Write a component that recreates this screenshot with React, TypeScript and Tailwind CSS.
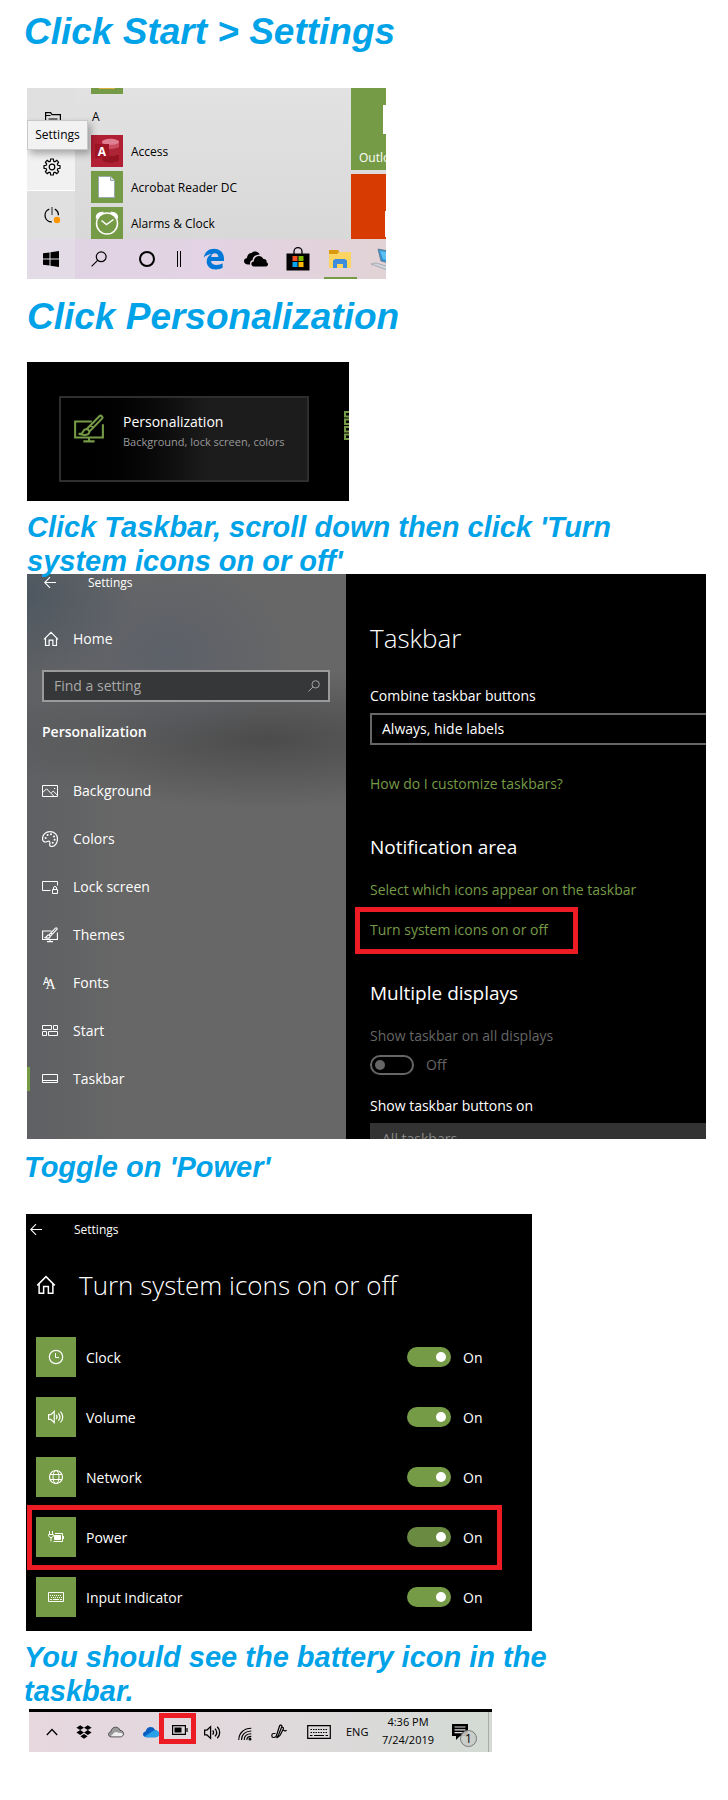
import { ReactNode } from "react";

interface IconProps {
  className?: string;
}

interface StrokeIconProps extends IconProps {
  box?: string;
  children: ReactNode;
}

const StrokeIcon = ({ className = "size-4", box = "0 0 16 16", children }: StrokeIconProps) => (
  <svg
    className={`shrink-0 ${className}`}
    viewBox={box}
    fill="none"
    stroke="currentColor"
    strokeWidth="1"
    aria-hidden="true"
  >
    {children}
  </svg>
);

const BackIcon = () => (
  <StrokeIcon className="w-3 h-3" box="0 0 12 12">
    <path d="M12 5.5H.8M6 .2L.7 5.500 6 10.800" strokeWidth="1.100" />
  </StrokeIcon>
);

const HomeIcon = ({ className }: IconProps) => (
  <StrokeIcon className={className}>
    <path d="M1 8.300L8 1.300l7 7M2.500 7v7.500h3.600V9.200h3.800v5.300h3.600V7" strokeWidth="1.200" />
  </StrokeIcon>
);

const SearchIcon = ({ className }: IconProps) => (
  <StrokeIcon className={className}>
    <circle cx="10.200" cy="5.800" r="4.900" strokeWidth="1.200" />
    <path d="M6.600 9.300L.6 15.400" strokeWidth="1.200" />
  </StrokeIcon>
);

const PictureIcon = () => (
  <StrokeIcon>
    <path d="M.5 2.500h15v11H.5zM.8 9.500L4.500 5.800l7.300 7.400M9.300 9.800l2-1.700 4 4" />
    <path d="M12 5h1.200v1H12z" fill="currentColor" stroke="none" />
  </StrokeIcon>
);

const PaletteIcon = () => (
  <StrokeIcon>
    <path
      d="M8 .6c4.400 0 7.500 3 7.500 7.200 0 4.300-2.800 7.700-5.700 7.700-1.600 0-2.300-.9-2.100-2.200.2-1.300.5-2-.1-2.800-.7-.8-1.700-.2-2.800.2C2.300 11.600.5 10.200.5 7.800.5 3.600 3.700.6 8 .6z"
      strokeWidth="1.200"
    />
    <g fill="currentColor" stroke="none">
      <circle cx="3.600" cy="7" r="1" />
      <circle cx="5.600" cy="4" r="1" />
      <circle cx="9" cy="3.300" r="1" />
      <circle cx="12" cy="5.400" r="1" />
      <circle cx="12.600" cy="8.800" r="1" />
      <circle cx="10.700" cy="11.800" r="1" />
    </g>
  </StrokeIcon>
);

const LockScreenIcon = () => (
  <StrokeIcon>
    <path d="M8.500 11.500h-8v-9h15v4M10.500 10.500h5v4h-5zM11.500 10.500V9a1.500 1.500 0 013 0v1.500" />
  </StrokeIcon>
);

const ThemesIcon = ({ className }: IconProps) => (
  <StrokeIcon className={className}>
    <path d="M9.500 4H.6v8.500h14.800V5.500M8 12.500v2M5 14.600h6" strokeWidth="1.100" />
    <path
      d="M2.500 10.600c1.800 0 2-.2 2.400-1.300.4-1.300 2-1.600 2.800-.8.9.9.4 2.400-1 2.600-1.500.2-2.800 0-4.200-.5zM6.700 8.100l6.800-6.900c.9-.8 2.200.3 1.400 1.300L8.200 9.400M8.800 6l1.800 1.500"
      strokeWidth="1.100"
    />
  </StrokeIcon>
);

const FontsIcon = () => (
  <span className="flex w-4 shrink-0 items-end pl-px" aria-hidden="true">
    <span className="pb-1 font-['Noto_Sans'] text-[10px] leading-3">A</span>
    <span className="-ml-1 font-['Liberation_Serif'] text-[14px] leading-3">A</span>
  </span>
);

const StartIcon = () => (
  <StrokeIcon>
    <path d="M.5 2.500h9v4h-9zM11.500 2.500h4v4h-4zM.5 8.500h4v4h-4zM6.500 8.500h9v4h-9z" />
  </StrokeIcon>
);

const TaskbarIcon = () => (
  <StrokeIcon>
    <path d="M.5 3.500h15v8H.5zM.5 9.500h15" />
  </StrokeIcon>
);

const GearIcon = () => (
  <StrokeIcon box="0 0 18 18" className="size-[18px]">
    <path
      d="M7.700 1h2.600l.4 2.200 1.200.5 1.900-1.300 1.800 1.800-1.300 1.900.5 1.200 2.200.4v2.600l-2.200.4-.5 1.200 1.300 1.900-1.800 1.800-1.900-1.300-1.200.5-.4 2.200H7.700l-.4-2.200-1.200-.5-1.900 1.300-1.800-1.800 1.300-1.900-.5-1.200L1 10.300V7.700l2.200-.4.5-1.200-1.300-1.900 1.800-1.800 1.900 1.300 1.200-.5z"
      strokeWidth="1.200"
    />
    <circle cx="9" cy="9" r="2.800" strokeWidth="1.200" />
  </StrokeIcon>
);

const PowerIcon = () => (
  <StrokeIcon box="0 0 18 18" className="size-[18px]">
    <path d="M9 1v8" strokeWidth="1.800" stroke="#777" />
    <path d="M6.300 3.200a6.500 6.500 0 002.500 12.600M11.800 3.200a6.500 6.500 0 013.600 6" strokeWidth="1.300" />
    <circle cx="14" cy="14" r="3.200" fill="#ff9500" stroke="none" />
  </StrokeIcon>
);

const FolderOutlineIcon = () => (
  <StrokeIcon>
    <path d="M.6 14V1.600h5l1.500 2h8.300V14zM3.500 8h9M.6 4.500h5" strokeWidth="1.200" />
  </StrokeIcon>
);

const VolumeIcon = ({ className }: IconProps) => (
  <StrokeIcon className={className}>
    <path
      d="M.6 5.700h2.200L6.200 2.500v11l-3.400-3.200H.6zM8.200 6c1 1.200 1 2.800 0 4M10.300 4.300c2 2.200 2 5.200 0 7.400M12.500 2.600c3 3.200 3 7.600 0 10.800"
      strokeWidth="1.200"
    />
  </StrokeIcon>
);

const ClockIcon = () => (
  <StrokeIcon>
    <circle cx="8" cy="8" r="6.700" strokeWidth="1.200" />
    <path d="M7.500 4v4.500H11" />
  </StrokeIcon>
);

const GlobeIcon = () => (
  <StrokeIcon>
    <circle cx="8" cy="8" r="6.500" strokeWidth="1.200" />
    <ellipse cx="8" cy="8" rx="3" ry="6.500" />
    <path d="M2 5.500h12M2 10.500h12" />
  </StrokeIcon>
);

const PlugBatteryIcon = () => (
  <StrokeIcon>
    <path d="M1.500 2v3M4.500 2v3M.5 5.500h5v1.200L4 8.500H2L.5 6.700zM3 8.500v4M7 4.500h7.500v8h-9M15.500 7v3" />
    <path d="M6.500 6.500h6v4h-6z" fill="currentColor" />
  </StrokeIcon>
);

const KeyboardIcon = ({ className }: IconProps) => (
  <StrokeIcon className={className} box="0 0 24 14">
    <path d="M.7.7h22.600v12.600H.7z" strokeWidth="1.200" />
    <path d="M3.500 4.500h17.500M3.500 7.500h17.500" strokeDasharray="1.500 1" />
    <path d="M3 10.500h2.500M7 10.500h10M18.500 10.500H21" />
  </StrokeIcon>
);

const SmallKeyboardIcon = () => (
  <StrokeIcon className="h-2.5 w-4" box="0 0 16 10">
    <path d="M.5.5h15v9H.5z" />
    <path d="M2 3.500h12M3 5.500h11" strokeDasharray="1 1" />
    <path d="M2 7.500h2M5 7.500h6M12 7.500h2" />
  </StrokeIcon>
);

/* ---- start menu ---- */

const AccessLogo = () => (
  <svg viewBox="0 0 32 32" className="size-8 shrink-0 bg-[#b01f33]" aria-hidden="true">
    <path d="M11 6v19c0 1.700 4 3 8.500 3s8.500-1.300 8.500-3V6z" fill="#c94f60" />
    <path d="M11 18v7c0 1.700 4 3 8.500 3s8.500-1.300 8.500-3v-6c-2 2-12 2-17-1z" fill="#941421" />
    <path d="M11 13v6c5 3 14 2 17 0v-7c-3 2-12 3-17 1z" fill="#ad2436" />
    <ellipse cx="19.500" cy="6.800" rx="8.500" ry="3" fill="#df7f92" />
    <path d="M4 9h14v14H4z" fill="#a01526" />
    <text x="11" y="20.500" textAnchor="middle" fill="#fff" fontSize="12" fontWeight="700" fontFamily="Open Sans, sans-serif">
      A
    </text>
  </svg>
);

const ReaderLogo = () => (
  <svg viewBox="0 0 32 32" className="size-8 shrink-0 bg-[#769b47]" aria-hidden="true">
    <path d="M7.500 5.500h12l4 4v17h-16z" fill="#fff" stroke="#9aa" />
    <path d="M19.500 5.500v4h4" fill="#ddd" stroke="#9aa" />
  </svg>
);

const AlarmLogo = () => (
  <svg
    viewBox="0 0 32 32"
    className="size-8 shrink-0 bg-[#769b47]"
    fill="none"
    stroke="#fff"
    strokeWidth="1.500"
    aria-hidden="true"
  >
    <path d="M5 12c-1-5 3-8 8-7zM27 12c1-5-3-8-8-7z" fill="#fff" stroke="none" />
    <circle cx="16" cy="16.500" r="10.500" fill="#769b47" />
    <path d="M10.500 13.500l5 4 7-5" />
  </svg>
);

const EdgeLogo = () => (
  <svg viewBox="0 0 22 22" className="size-[22px]" aria-hidden="true">
    <path
      d="M.8 9.700C1.600 4.200 5.400.7 11 .7c6.200 0 10 4.200 10 10v2.300H8c.2 2.700 2.500 4 5.600 4 2.200 0 4.300-.6 6-1.700v4.400c-1.900 1.100-4.200 1.700-6.900 1.700-5.500 0-9-3.300-9-8 0-3.300 1.800-6 5-7.400C5.200 6.500 2.400 7.600.8 9.700zM8.200 9h7.100c0-2.400-1.300-3.700-3.500-3.700S8.500 6.600 8.200 9z"
      fill="#0078d7"
      fillRule="evenodd"
    />
  </svg>
);

const OneDriveLogo = () => (
  <svg viewBox="0 0 24 16" className="h-4 w-6" aria-hidden="true">
    <path
      d="M4 13.500c-2.300 0-4-1.300-4-3.200C0 8.600 1.100 7.300 3 7c.2-3 2-5 4.600-5C9 .5 11 .2 12.700.7c1.300.4 2.300 1.300 3 2.700C11 3.600 8.500 6 8.600 9c-1.900.5-3 2-2.400 4.500z"
      fill="#000"
    />
    <path d="M9.800 15.500c-3.500-.5-3-5 0-5 0-6 7.300-7.600 9.600-2.600 3-.2 3.600 2.200 3 3.300 2.400.8 2 4.100-.4 4.300z" fill="#000" />
  </svg>
);

const StoreLogo = () => (
  <svg viewBox="0 0 24 24" className="size-6" aria-hidden="true">
    <path d="M8 8V4.500a4 3.800 0 018 0V8" fill="none" stroke="#000" strokeWidth="1.300" />
    <path d="M.5 6.500h23v17H.5z" fill="#000" />
    <path d="M6.500 9h5v5h-5z" fill="#f25022" />
    <path d="M12.500 9h5v5h-5z" fill="#7fba00" />
    <path d="M6.500 15h5v5h-5z" fill="#00a4ef" />
    <path d="M12.500 15h5v5h-5z" fill="#ffb900" />
  </svg>
);

const ExplorerLogo = () => (
  <svg viewBox="0 0 22 20" className="h-5 w-[22px]" aria-hidden="true">
    <path d="M0 1h9l2 3v5H0z" fill="#d99a0c" />
    <path d="M0 5h8l2-2h12v16H0z" fill="#fcd462" />
    <path d="M4 19v-7.500L6 10h10l2 1.500V19h-4v-4H8v4z" fill="#3e8ddd" />
  </svg>
);

const ComputerLogo = () => (
  <svg viewBox="0 0 24 22" className="h-[22px] w-6 shrink-0" aria-hidden="true">
    <path d="M7 1l15 3v12L10 13z" fill="#2f94d9" stroke="#6b7f90" />
    <path d="M9 3l12 2v9l-9-3z" fill="#5ec0f2" />
    <path d="M0 16l5-1 14 4-3 3z" fill="#cfd5da" stroke="#8a949c" strokeWidth=".6" />
  </svg>
);

const apps = [
  { name: "Access", logo: <AccessLogo /> },
  { name: "Acrobat Reader DC", logo: <ReaderLogo /> },
  { name: "Alarms & Clock", logo: <AlarmLogo /> },
];

const StartMenu = () => (
  <section className="w-full max-w-[359px] overflow-hidden bg-linear-to-b from-[#e2e2e2] to-[#d6d6d6] text-[12px] text-black">
    <div className="flex h-[151px]">
      <div className="relative flex w-12 shrink-0 flex-col bg-[#e0e0e0] pt-[7px]">
        <button className="flex h-12 shrink-0 justify-center pt-4 pl-1" aria-label="Documents">
          <FolderOutlineIcon />
        </button>
        <button
          className="flex h-12 shrink-0 items-center justify-center border-b border-white bg-[#f1f1f1] pl-0.5"
          aria-label="Settings"
        >
          <GearIcon />
        </button>
        <button className="flex h-12 shrink-0 items-center justify-center pl-0.5" aria-label="Power">
          <PowerIcon />
        </button>
        <div
          role="tooltip"
          className="absolute top-8 left-0 z-10 flex h-[30px] w-[61px] items-center justify-center border border-[#c8c8c8] bg-[#f2f2f2] shadow-[3px_4px_7px_rgba(0,0,0,0.3)]"
        >
          Settings
        </div>
      </div>
      <div className="flex-1 pl-4">
        <div className="flex h-1.5 w-8 justify-center bg-[#769b47]">
          <div className="h-px w-4 bg-[#d8b040]" />
        </div>
        <div className="flex h-[39px] items-center pt-1.5 pl-px">A</div>
        <ul>
          {apps.map((app) => (
            <li key={app.name} className="flex h-9 items-center gap-2">
              {app.logo}
              <span className="pt-px">{app.name}</span>
            </li>
          ))}
        </ul>
      </div>
      <div className="flex w-[35px] shrink-0 flex-col gap-1 overflow-hidden text-white">
        <div className="flex h-[82px] shrink-0 flex-col items-end justify-between bg-[#769b47] pt-[17px]">
          <div className="h-[29px] w-[3px] bg-white" />
          <div className="w-full pb-[3px] pl-2">Outlook</div>
        </div>
        <div className="flex flex-1 items-end justify-end bg-[#d83b01] pb-0.5">
          <div className="h-[26px] w-px bg-white" />
        </div>
      </div>
    </div>
    <div className="flex h-10 items-center bg-linear-to-r from-[#dfd3e2] via-[#e3d3e4] to-[#e2d3d6]">
      <button className="flex h-full w-12 shrink-0 items-center justify-center bg-[#e3dbe5]" aria-label="Start">
        <svg viewBox="0 0 16 16" className="size-4" aria-hidden="true">
          <path d="M0 2.300l6.500-.9v6.100H0zM7.500 1.200L16 0v7.500H7.500zM0 8.500h6.500v6.100L0 13.700zM7.500 8.500H16V16l-8.500-1.200z" />
        </svg>
      </button>
      <button className="flex w-12 shrink-0 justify-center" aria-label="Search">
        <SearchIcon />
      </button>
      <button className="flex w-12 shrink-0 justify-center" aria-label="Cortana">
        <span className="size-4 rounded-full border-2 border-black" />
      </button>
      <div className="mr-1.5 flex w-4 shrink-0 justify-center gap-0.5">
        <span className="h-4 w-px bg-black" />
        <span className="h-4 w-px bg-black" />
      </div>
      <button className="flex w-[42px] shrink-0 justify-center" aria-label="Edge">
        <EdgeLogo />
      </button>
      <button className="flex w-[42px] shrink-0 justify-center" aria-label="OneDrive">
        <OneDriveLogo />
      </button>
      <button className="flex w-[42px] shrink-0 justify-center" aria-label="Store">
        <StoreLogo />
      </button>
      <button className="flex h-full w-[42px] shrink-0 flex-col items-center justify-between" aria-label="File Explorer">
        <span className="pt-2.5">
          <ExplorerLogo />
        </span>
        <span className="h-0.5 w-[33px] bg-[#769b47]" />
      </button>
      <button className="flex w-[42px] shrink-0 pl-2.5" aria-label="This PC">
        <ComputerLogo />
      </button>
    </div>
  </section>
);

/* ---- settings tile ---- */

const PersonalizationTile = () => (
  <section className="flex w-full max-w-[322px] justify-between bg-black pt-[34px] pb-[19px] pl-8">
    <button className="flex h-[86px] w-[250px] gap-[19px] border-2 border-[#2e2e2e] bg-linear-to-r from-black to-[#1c1c1c] to-60% pt-3.5 pl-[13px] text-left">
      <span className="flex pt-0.5 text-[#769b47]">
        <ThemesIcon className="size-[30px]" />
      </span>
      <span className="flex flex-col">
        <span className="text-[14px] leading-5 text-white">Personalization</span>
        <span className="text-[11px] leading-5 whitespace-nowrap text-[#999]">Background, lock screen, colors</span>
      </span>
    </button>
    <svg
      viewBox="0 0 5 30"
      className="mt-[15px] h-[30px] w-[5px]"
      fill="none"
      stroke="#769b47"
      strokeWidth="2"
      aria-hidden="true"
    >
      <path d="M6 1H1v4.500h5M6 8.500H1V13h5M6 16H1v4.500h5M6 23.500H1V28h5" />
    </svg>
  </section>
);

/* ---- taskbar settings ---- */

const navItems = [
  { name: "Background", icon: <PictureIcon /> },
  { name: "Colors", icon: <PaletteIcon /> },
  { name: "Lock screen", icon: <LockScreenIcon /> },
  { name: "Themes", icon: <ThemesIcon /> },
  { name: "Fonts", icon: <FontsIcon /> },
  { name: "Start", icon: <StartIcon /> },
  { name: "Taskbar", icon: <TaskbarIcon /> },
];

const TaskbarSettings = () => (
  <section className="flex w-full max-w-[679px] overflow-hidden bg-black text-[14px] leading-6 text-white">
    <aside className="w-[319px] shrink-0 bg-[radial-gradient(ellipse_110px_80px_at_0_20px,#43526099,transparent),radial-gradient(ellipse_130px_100px_at_140px_80px,#565c6a99,transparent),radial-gradient(ellipse_280px_70px_at_240px_165px,#454545cc,transparent),linear-gradient(90deg,#5e6063,#676767_30%)] pb-9">
      <div className="flex h-[18px] items-center gap-8 pl-[17px] text-[12px]">
        <BackIcon />
        <span>Settings</span>
      </div>
      <a href="#home" className="mt-[23px] flex h-12 items-center gap-3.5 pl-4">
        <HomeIcon />
        <span>Home</span>
      </a>
      <div className="mt-[7px] mr-4 ml-[15px] flex h-8 items-center border-2 border-[#9a9a9a] bg-[#363738] pr-2 pl-2.5">
        <input
          type="text"
          aria-label="Find a setting"
          placeholder="Find a setting"
          className="min-w-0 flex-1 bg-transparent outline-none placeholder:text-[#a8a8a8]"
        />
        <span className="text-[#b0b0b0]">
          <SearchIcon className="size-3" />
        </span>
      </div>
      <h3 className="flex h-[60px] items-center pl-[15px] font-semibold">Personalization</h3>
      <nav className="mt-[5px]">
        {navItems.map((item) => (
          <a key={item.name} href="#nav" className="flex h-12 items-center">
            <span className={item.name === "Taskbar" ? "h-6 w-[3px] bg-[#769b47]" : "h-6 w-[3px]"} />
            <span className="flex items-center gap-[15px] pl-3">
              {item.icon}
              <span>{item.name}</span>
            </span>
          </a>
        ))}
      </nav>
    </aside>
    <div className="min-w-0 flex-1 pt-11 pl-6">
      <h3 className="text-[26px] leading-10 font-light">Taskbar</h3>
      <label htmlFor="combine" className="mt-[26px] block">
        Combine taskbar buttons
      </label>
      <select
        id="combine"
        className="mt-[5px] block h-8 w-full appearance-none border-2 border-r-0 border-[#666] bg-black pl-2.5 text-[14px]"
      >
        <option>Always, hide labels</option>
      </select>
      <a href="#customize" className="mt-[27px] block text-[#769b47]">
        How do I customize taskbars?
      </a>
      <h4 className="mt-[35px] text-[19px] leading-8">Notification area</h4>
      <a href="#icons" className="mt-[15px] block text-[#769b47]">
        Select which icons appear on the taskbar
      </a>
      <a
        href="#system-icons"
        className="mt-[5px] -ml-[15px] flex h-[47px] w-[223px] items-center border-[5px] border-[#ed1c24] pb-0.5 pl-2.5 text-[#769b47]"
      >
        Turn system icons on or off
      </a>
      <h4 className="mt-[23px] text-[19px] leading-8">Multiple displays</h4>
      <label htmlFor="all-displays" className="mt-[15px] block text-[#666]">
        Show taskbar on all displays
      </label>
      <div className="mt-[7px] flex h-5 items-center gap-3 text-[#666]">
        <input
          id="all-displays"
          type="checkbox"
          disabled
          className="flex h-5 w-11 appearance-none items-center rounded-full border-2 border-[#666] px-[3px] before:size-2.5 before:rounded-full before:bg-[#666]"
        />
        <span>Off</span>
      </div>
      <label htmlFor="buttons-on" className="mt-[19px] block">
        Show taskbar buttons on
      </label>
      <div className="mt-[5px] h-4 overflow-hidden">
        <select
          id="buttons-on"
          disabled
          className="block h-8 w-full appearance-none bg-[#333] pl-3 text-[#888] opacity-100"
        >
          <option>All taskbars</option>
        </select>
      </div>
    </div>
  </section>
);

/* ---- system icons ---- */

const systemIcons = [
  { name: "Clock", icon: <ClockIcon /> },
  { name: "Volume", icon: <VolumeIcon /> },
  { name: "Network", icon: <GlobeIcon /> },
  { name: "Power", icon: <PlugBatteryIcon /> },
  { name: "Input Indicator", icon: <SmallKeyboardIcon /> },
];

const SystemIcons = () => (
  <section className="w-full max-w-[506px] bg-black pb-1 text-[14px] text-white">
    <div className="flex h-8 items-center gap-8 pl-1 text-[12px]">
      <BackIcon />
      <span>Settings</span>
    </div>
    <div className="mt-[19px] flex h-10 items-center gap-[23px] pl-2.5">
      <HomeIcon className="size-5" />
      <h3 className="text-[26px] leading-10 font-light whitespace-nowrap">Turn system icons on or off</h3>
    </div>
    <div className="mt-[22px]">
      {systemIcons.map((item) => (
        <label key={item.name} className="relative flex h-[60px] items-center pr-[49px] pl-2.5">
          <span className="flex size-10 items-center justify-center bg-[#769b47]">{item.icon}</span>
          <span className="flex-1 pl-2.5">{item.name}</span>
          <input
            type="checkbox"
            defaultChecked
            className={`mr-3 flex h-5 w-11 appearance-none items-center justify-end rounded-full px-[5px] before:size-2.5 before:rounded-full before:bg-white ${
              item.name === "Power" ? "bg-[#6a8a42]" : "bg-[#769b47]"
            }`}
          />
          <span className="w-5">On</span>
          {item.name === "Power" && (
            <span className="absolute -top-0.5 right-[30px] -bottom-[3px] left-px border-[5px] border-[#ed1c24]" />
          )}
        </label>
      ))}
    </div>
  </section>
);

/* ---- tray ---- */

const CloudIcon = () => (
  <svg viewBox="0 0 16 12" className="h-3 w-4" aria-hidden="true">
    <path
      d="M3.500 10.900C1.500 10.900.5 9.700.5 8.300c0-1.300 1-2.400 2.300-2.500C3.300 3 5 1.200 7.500 1.200s3.800 1.200 4.500 3.200c2.200 0 3.500 1.500 3.500 3.300s-1.200 3.200-3.200 3.200z"
      fill="#999"
    />
    <path d="M3.500 10.900c-.6-1.200 0-2.300 1.500-2.700 1-2.500 4-3 5.500-1.200 2-.7 4.300.2 5 1.700-.2 1.300-1.500 2.200-3.200 2.200z" fill="#eee" />
    <path
      d="M3.500 10.900C1.500 10.900.5 9.700.5 8.300c0-1.300 1-2.400 2.300-2.500C3.300 3 5 1.200 7.500 1.200s3.800 1.200 4.500 3.200c2.200 0 3.500 1.500 3.500 3.300s-1.200 3.200-3.200 3.200z"
      fill="none"
      stroke="#444"
      strokeWidth=".9"
    />
  </svg>
);

const BlueCloudIcon = () => (
  <svg viewBox="0 0 16 12" className="h-3 w-4" aria-hidden="true">
    <path
      d="M3.500 11.200C1.300 11.200 0 9.900 0 8.300c0-1.300 1-2.500 2.600-2.700C3.100 2.800 5 1 7.500 1s3.800 1.200 4.500 3.200c2.200 0 4 1.500 4 3.500s-1.500 3.500-3.700 3.500z"
      fill="#0a5fc0"
    />
    <path d="M1.500 10.500L9.500 5.300c1-.8 2-1 3-1 2 .2 3.500 1.600 3.500 3.400 0 2-1.500 3.500-3.700 3.500H3.500c-.8 0-1.500-.2-2-.7z" fill="#28a0ea" />
  </svg>
);

const TaskbarTray = () => (
  <section className="w-full max-w-[463px] overflow-hidden border-t-[3px] border-black bg-linear-to-r from-[#e7d7df] via-[#e0d9dc] to-[#d3dad4] text-[11px] text-black">
    <div className="flex h-10 items-center pl-[7px]">
      <button className="flex w-8 shrink-0 justify-center" aria-label="Show hidden icons">
        <StrokeIcon className="size-3" box="0 0 12 12">
          <path d="M.8 9L6 3.500 11.200 9" strokeWidth="1.300" />
        </StrokeIcon>
      </button>
      <button className="flex w-8 shrink-0 justify-center" aria-label="Dropbox">
        <svg viewBox="0 0 16 14" className="h-3.5 w-4" aria-hidden="true">
          <path d="M4.200.3L8 2.700 4.200 5.100.4 2.700zM11.800.3l3.800 2.400-3.800 2.400L8 2.700zM4.200 5.100L8 7.500 4.200 9.900.4 7.500zM11.800 5.100l3.800 2.400-3.800 2.400L8 7.500zM8 9l3.600 2.300L8 13.700l-3.600-2.400z" />
        </svg>
      </button>
      <button className="flex w-8 shrink-0 justify-center" aria-label="OneDrive personal">
        <CloudIcon />
      </button>
      <button className="flex w-[27px] shrink-0 justify-end" aria-label="OneDrive">
        <BlueCloudIcon />
      </button>
      <button
        className="mr-0.5 -mt-2 flex h-[31px] w-[37px] shrink-0 items-center justify-center border-[5px] border-[#ed1c24] pt-1 pl-1"
        aria-label="Battery"
      >
        <StrokeIcon className="h-2.5 w-4" box="0 0 16 10">
          <path d="M.6.6h12.800v8.800H.6zM15 3v4" strokeWidth="1.200" />
          <path d="M2.500 2.500h7v5h-7z" fill="currentColor" stroke="none" />
        </StrokeIcon>
      </button>
      <button className="flex w-[29px] shrink-0 justify-center" aria-label="Volume">
        <VolumeIcon className="size-[17px]" />
      </button>
      <button className="flex w-9 shrink-0 justify-center pt-1" aria-label="Network">
        <StrokeIcon className="size-3.5" box="0 0 14 14">
          <path
            d="M.8 13C.8 6 6 1.300 13.300 1.300M3.500 13c0-5.500 4-9 9.800-9M6.200 13c0-3.800 2.800-6.200 7.100-6.200M8.800 13c0-2.200 1.700-3.600 4.500-3.600"
            strokeWidth="1.100"
          />
          <circle cx="12" cy="12" r="1.500" fill="currentColor" stroke="none" />
        </StrokeIcon>
      </button>
      <button className="flex w-8 shrink-0 justify-center" aria-label="Ink workspace">
        <StrokeIcon>
          <path
            d="M4.500 9.500H2.300C.3 9.500.3 13.500 2.300 13.500c2.700 0 3-1 3.700-3.500L8.500 2C9 .5 11.200.8 10.900 2.500L7.500 11 5.500 14M10.500 3.500c1-.8 2.300.2 1.800 1.500L9 11.500M12 6l1.500.8c1 .4 1.800-.2 2-.8M5.500 14L9 11.500"
            strokeWidth="1.200"
          />
        </StrokeIcon>
      </button>
      <button className="flex w-[47px] shrink-0 justify-center pl-px" aria-label="Touch keyboard">
        <KeyboardIcon className="h-3.5 w-6" />
      </button>
      <span className="w-[34px] shrink-0 pl-1">ENG</span>
      <div className="flex w-[62px] shrink-0 flex-col pb-0.5 pl-0.5 text-center leading-[18px]">
        <span>4:36 PM</span>
        <span>7/24/2019</span>
      </div>
      <button className="relative ml-3 flex w-7 shrink-0 pl-0.5" aria-label="Notifications">
        <svg viewBox="0 0 16 16" className="size-4" aria-hidden="true">
          <path d="M0 0h16v12H8l-4 4v-4H0z" />
          <path d="M2.500 3h11M2.500 5.800h11M2.500 8.600h8" stroke="#ddd" strokeWidth="1.200" />
        </svg>
        <span className="absolute top-1.5 left-2.5 flex size-[17px] items-center justify-center rounded-full border border-[#777] bg-[#c9ccc9]/90 text-[12px]">
          1
        </span>
      </button>
      <span className="mr-[3px] ml-auto h-full w-px bg-[#aaa]" />
    </div>
  </section>
);

interface StepHeadingProps {
  className: string;
  children: ReactNode;
}

const StepHeading = ({ className, children }: StepHeadingProps) => (
  <h2 className={`font-['Liberation_Sans',Arial,sans-serif] font-bold text-[#00a2e8] italic ${className}`}>
    {children}
  </h2>
);

const App = () => {
  return (
    <main className="min-h-screen bg-white pt-2.5 pr-5 pb-12 pl-6 font-['Open_Sans','Noto_Sans',sans-serif]">
      <StepHeading className="text-[37px] leading-11">Click Start &gt; Settings</StepHeading>
      <div className="mt-[34px] pl-[3px]">
        <StartMenu />
      </div>
      <StepHeading className="mt-4 pl-[3px] text-[37px] leading-11">Click Personalization</StepHeading>
      <div className="mt-[23px] pl-[3px]">
        <PersonalizationTile />
      </div>
      <StepHeading className="relative z-10 mt-[9px] max-w-[650px] pl-[3px] text-[29px] leading-[34px]">
        Click Taskbar, scroll down then click 'Turn system icons on or off'
      </StepHeading>
      <div className="-mt-1 pl-[3px]">
        <TaskbarSettings />
      </div>
      <StepHeading className="mt-[11px] text-[29px] leading-[34px]">Toggle on 'Power'</StepHeading>
      <div className="mt-[30px] pl-0.5">
        <SystemIcons />
      </div>
      <StepHeading className="mt-[9px] max-w-[600px] text-[29px] leading-[34px]">
        You should see the battery icon in the taskbar.
      </StepHeading>
      <div className="mt-px pl-[5px]">
        <TaskbarTray />
      </div>
    </main>
  );
};

export default App;
